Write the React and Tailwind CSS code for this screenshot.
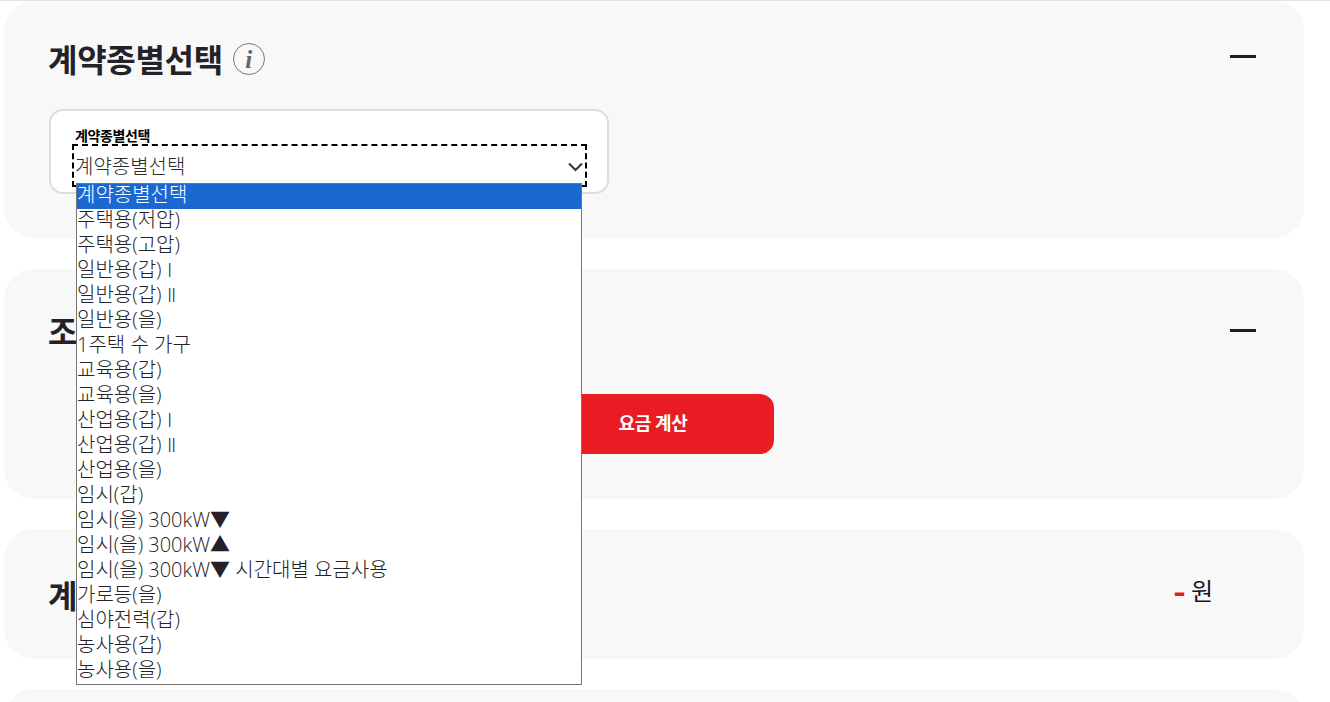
const options = [
  "계약종별선택",
  "주택용(저압)",
  "주택용(고압)",
  "일반용(갑) Ⅰ",
  "일반용(갑) Ⅱ",
  "일반용(을)",
  "1주택 수 가구",
  "교육용(갑)",
  "교육용(을)",
  "산업용(갑) Ⅰ",
  "산업용(갑) Ⅱ",
  "산업용(을)",
  "임시(갑)",
  "임시(을) 300kW▼",
  "임시(을) 300kW▲",
  "임시(을) 300kW▼ 시간대별 요금사용",
  "가로등(을)",
  "심야전력(갑)",
  "농사용(갑)",
  "농사용(을)",
];

const font = "font-['Noto_Sans_CJK_KR','Noto_Sans',sans-serif]";
// DejaVu comes first so the roman numerals and triangles stay narrow, as in the native list
const listFont = "font-['Open_Sans','DejaVu_Sans','Noto_Sans_CJK_KR',sans-serif]";

const Minus = () => <span className="block h-[3px] w-[26px] bg-[#1e1e24]" />;

const App = () => {
  return (
    <div className={`h-[702px] overflow-hidden bg-white text-[#222228] ${font}`}>
      <div className="h-px bg-[#e2e3ea]" />

      <section className="ml-1 h-[237px] w-[1300px] rounded-[30px] bg-[#f8f8f9] pl-[44px] pr-[48px] pt-[36px]">
        <div className="flex h-[42px] items-center justify-between">
          <div className="flex items-center gap-[10px]">
            <h2 className="text-[32px] leading-[42px] font-bold tracking-[-0.3px]">계약종별선택</h2>
            <span className="mt-[2px] flex h-[32px] w-[32px] items-center justify-center rounded-full border border-[#77777d] bg-[#f8f8f9] font-['Liberation_Serif',serif] text-[25px] leading-none font-bold text-[#66666c] italic">
              i
            </span>
          </div>
          <span className="-mt-[4px]">
            <Minus />
          </span>
        </div>

        <div className="relative z-10 ml-px mt-[30px] h-[85px] w-[560px] rounded-[14px] border-2 border-[#dadde5] bg-white pl-[24px]">
          <div className="pt-[15px] text-[14px] leading-[18px] font-bold tracking-[-0.4px] text-black">계약종별선택</div>
          <div className="-ml-[3px] flex h-[43px] w-[515px] items-center justify-between border-2 border-dashed border-black pl-[1px] pr-[2px]">
            <span className="text-[20px] leading-[25px] font-light text-[#2a2a30]">계약종별선택</span>
            <svg width="15" height="10" viewBox="0 0 15 10" fill="none" className="mt-[3px]">
              <path d="M1 1.5 7.5 8 14 1.5" stroke="#333339" strokeWidth="2" />
            </svg>
          </div>
          <ul className={`absolute left-[25px] top-[72px] w-[506px] border border-[#767676] bg-white ${listFont}`}>
            {options.map((option, index) => (
              <li
                key={option}
                className={`h-[25px] whitespace-nowrap text-[20px] leading-[21px] font-light ${
                  index === 0 ? "bg-[#1a69d2] text-white" : "text-[#222228]"
                }`}
              >
                {option}
              </li>
            ))}
          </ul>
        </div>
      </section>

      <section className="ml-1 mt-[31px] h-[230px] w-[1300px] rounded-[30px] bg-[#f8f8f9] pl-[44px] pr-[48px] pt-[40px]">
        <div className="flex h-[42px] items-center justify-between">
          <h2 className="text-[32px] leading-[42px] font-bold tracking-[-0.3px]">조회조건</h2>
          <Minus />
        </div>
        <button className="ml-[484px] mt-[43px] h-[60px] w-[242px] rounded-[14px] bg-[#e91c24] pb-[3px] text-[18px] font-bold tracking-[-0.3px] text-white">
          요금 계산
        </button>
      </section>

      <section className="ml-1 mt-[30px] flex h-[130px] w-[1300px] items-center justify-between rounded-[30px] bg-[#f8f8f9] pl-[44px] pr-[91px]">
        <h2 className="text-[32px] leading-[42px] font-bold tracking-[-0.3px]">계산결과</h2>
        <div className="flex items-center gap-[5px] pb-[8px] leading-[32px]">
          <span className="text-[34px] font-bold text-[#e91c24]">-</span>
          <span className="text-[24px] text-[#16161c]">원</span>
        </div>
      </section>

      <section className="ml-1 mt-[30px] h-[100px] w-[1300px] rounded-[30px] bg-[#f8f8f9]" />
    </div>
  );
};

export default App;
